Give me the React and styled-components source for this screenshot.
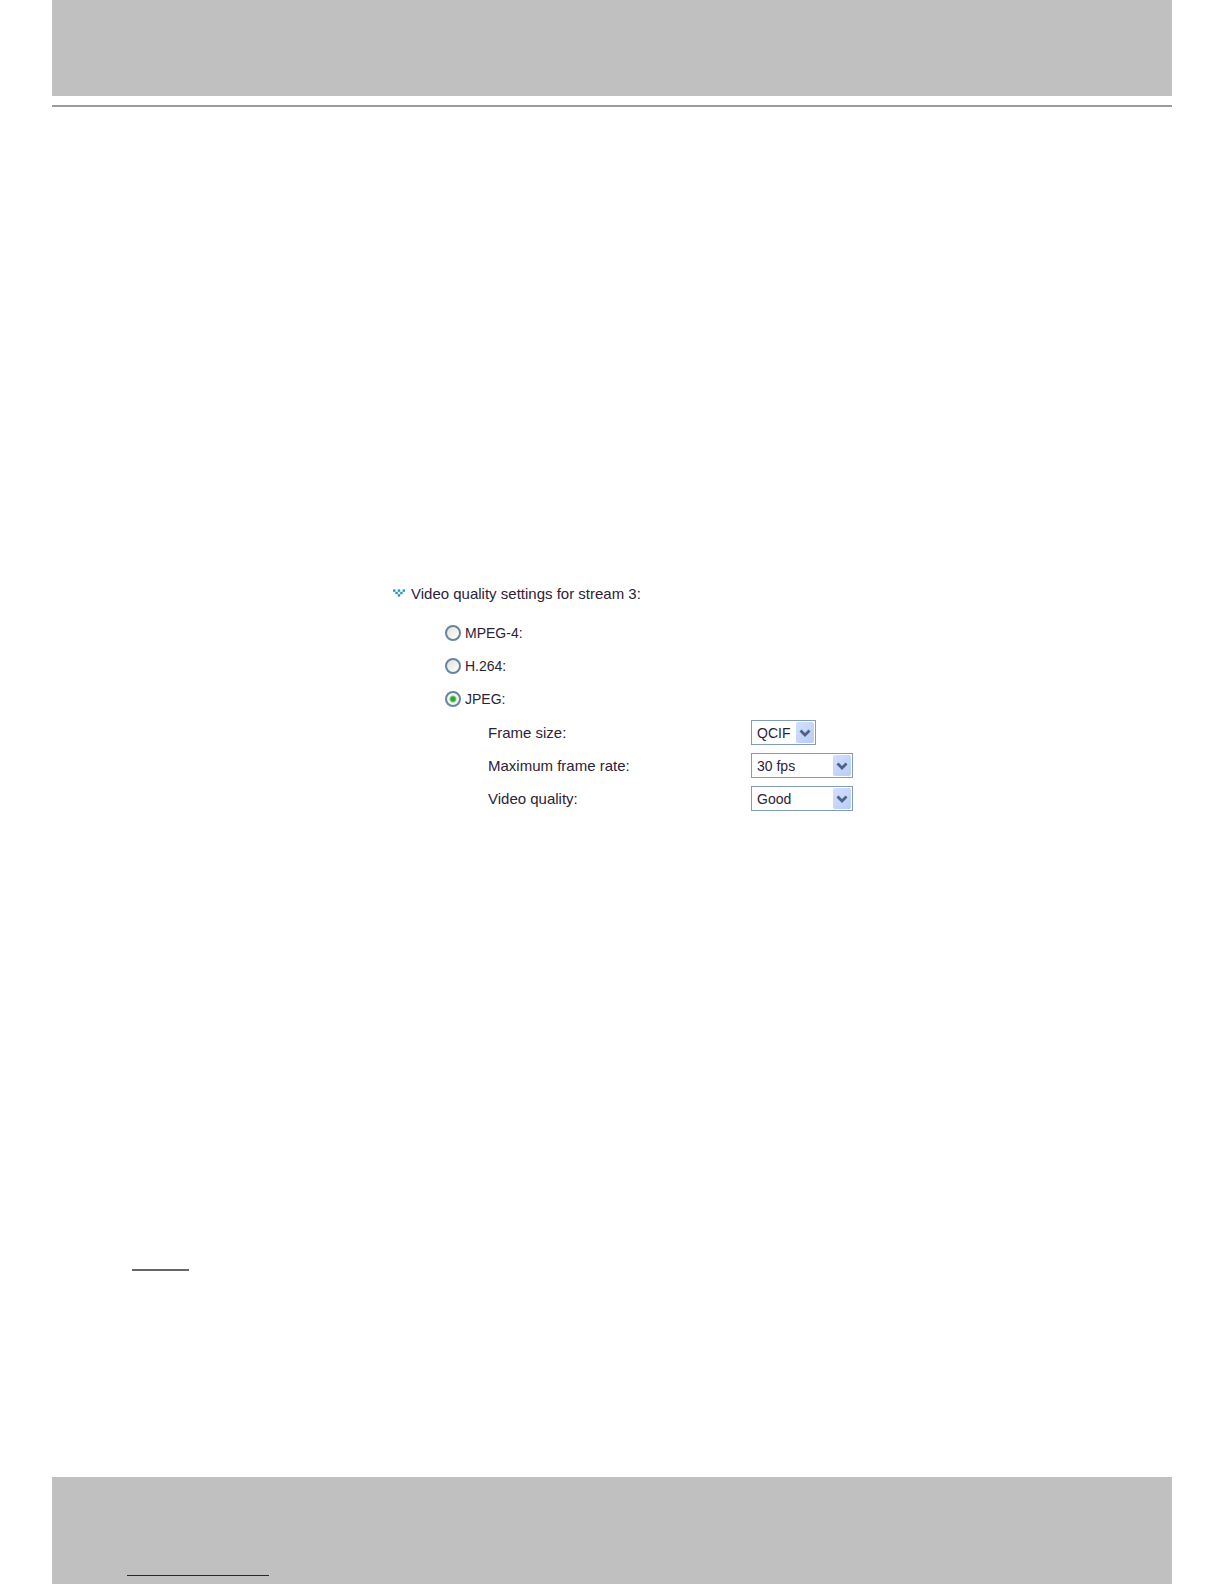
import React, { useState } from "react";
import styled, { createGlobalStyle } from "styled-components";

const GlobalStyle = createGlobalStyle`
  *, *::before, *::after { box-sizing: border-box; }
  body {
    margin: 0;
    background: #fff;
    color: #2b2338;
    font-family: "Liberation Sans", Arial, sans-serif;
  }
`;

const Page = styled.div`
  display: flex;
  flex-direction: column;
  min-height: 100vh;
  padding: 0 52px;
`;

const Header = styled.header`
  height: 96px;
  background: #c0c0c0;
`;

const Rule = styled.hr`
  width: ${(p) => p.$width};
  height: ${(p) => p.$thickness}px;
  margin: 0;
  border: 0;
  background: ${(p) => p.$color};
`;

const HeaderRule = styled(Rule)`
  margin-top: 9px;
`;

const Main = styled.main`
  display: flex;
  flex: 1;
  flex-direction: column;
  padding: 475px 0 206px;
`;

const Panel = styled.form`
  width: 480px;
  max-width: 100%;
  margin: 0 0 auto 341px;
`;

const Heading = styled.h2`
  display: flex;
  align-items: center;
  gap: 6px;
  height: 22px;
  margin: 0 0 12px;
  font-size: 15px;
  font-weight: 400;
`;

const CodecList = styled.div`
  padding-left: 52px;
`;

const CodecRow = styled.label`
  display: flex;
  align-items: center;
  gap: 4px;
  height: 33px;
  font-size: 14px;
`;

const Radio = styled.input`
  appearance: none;
  width: 16px;
  height: 16px;
  margin: 0;
  border: 2px solid #6685a0;
  border-radius: 50%;
  background: ${(p) =>
    p.checked
      ? "radial-gradient(circle, #2fa82f 0 2px, #7fcf78 3px, #f4f6f2 4px)"
      : "linear-gradient(135deg, #e2e2dc, #fff)"};
`;

const Settings = styled.div`
  display: grid;
  grid-template-columns: 263px auto;
  grid-auto-rows: 33px;
  align-items: center;
  justify-items: start;
  padding: 1px 0 0 95px;
`;

const SettingLabel = styled.label`
  font-size: 15px;
`;

const SelectBox = styled.div`
  position: relative;
  width: ${(p) => p.$width}px;
`;

const Select = styled.select`
  display: block;
  appearance: none;
  width: 100%;
  height: 25px;
  padding: 0 20px 0 5px;
  border: 1px solid #7f9db9;
  border-radius: 0;
  background: #fff;
  color: inherit;
  font-family: inherit;
  font-size: 14px;
`;

const Arrow = styled.svg`
  position: absolute;
  top: 2px;
  right: 2px;
  width: 18px;
  height: 21px;
  border-radius: 2px;
  background: linear-gradient(135deg, #d3dffd, #b9ccf5);
  pointer-events: none;
`;

const NoteRule = styled(Rule)`
  margin-left: 80px;
`;

const Footer = styled.footer`
  height: 107px;
  padding: 98px 0 0 75px;
  background: #c0c0c0;
`;

const DOTS = [
  [0, 0], [4, 0], [8, 0],
  [2, 2], [6, 2],
  [4, 4],
];

function ExpandMark() {
  return (
    <svg width="12" height="8" viewBox="0 0 10 6" aria-hidden="true">
      {DOTS.map(([x, y]) => (
        <rect key={`${x}-${y}`} x={x} y={y} width="2" height="2" fill="#2795c4" />
      ))}
    </svg>
  );
}

const CODECS = ["MPEG-4", "H.264", "JPEG"];

const SETTINGS = [
  { id: "size", label: "Frame size:", options: ["QCIF"], width: 65 },
  { id: "rate", label: "Maximum frame rate:", options: ["30 fps"], width: 102 },
  { id: "quality", label: "Video quality:", options: ["Good"], width: 102 },
];

export default function App() {
  const [codec, setCodec] = useState("JPEG");
  return (
    <>
      <GlobalStyle />
      <Page>
        <Header />
        <HeaderRule $width="100%" $thickness={2} $color="#9c9c9c" />
        <Main>
          <Panel>
            <Heading>
              <ExpandMark />
              Video quality settings for stream 3:
            </Heading>
            <CodecList>
              {CODECS.map((name) => (
                <CodecRow key={name}>
                  <Radio
                    type="radio"
                    name="codec"
                    value={name}
                    checked={codec === name}
                    onChange={() => setCodec(name)}
                  />
                  {name}:
                </CodecRow>
              ))}
            </CodecList>
            <Settings>
              {SETTINGS.map(({ id, label, options, width }) => (
                <React.Fragment key={id}>
                  <SettingLabel htmlFor={id}>{label}</SettingLabel>
                  <SelectBox $width={width}>
                    <Select id={id}>
                      {options.map((option) => (
                        <option key={option}>{option}</option>
                      ))}
                    </Select>
                    <Arrow viewBox="0 0 18 21" aria-hidden="true">
                      <path d="M4.5 8.5 9 13l4.5-4.5" fill="none" stroke="#4d6185" strokeWidth="2.8" />
                    </Arrow>
                  </SelectBox>
                </React.Fragment>
              ))}
            </Settings>
          </Panel>
          <NoteRule $width="57px" $thickness={2} $color="#696565" />
        </Main>
        <Footer>
          <Rule $width="142px" $thickness={1} $color="#1414c8" />
        </Footer>
      </Page>
    </>
  );
}
